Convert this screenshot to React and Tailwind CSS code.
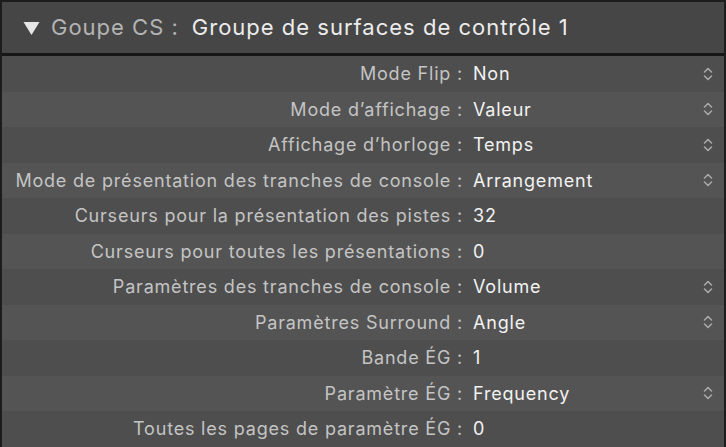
import React from "react";

const rows = [
  { label: "Mode Flip", value: "Non", pop: true },
  { label: "Mode d’affichage", value: "Valeur", pop: true },
  { label: "Affichage d’horloge", value: "Temps", pop: true },
  { label: "Mode de présentation des tranches de console", value: "Arrangement", pop: true },
  { label: "Curseurs pour la présentation des pistes", value: "32", pop: false },
  { label: "Curseurs pour toutes les présentations", value: "0", pop: false },
  { label: "Paramètres des tranches de console", value: "Volume", pop: true },
  { label: "Paramètres Surround", value: "Angle", pop: true },
  { label: "Bande ÉG", value: "1", pop: false },
  { label: "Paramètre ÉG", value: "Frequency", pop: true },
  { label: "Toutes les pages de paramètre ÉG", value: "0", pop: false },
];

function Chevrons() {
  return (
    <svg width="12" height="16" viewBox="0 0 12 16" fill="none" stroke="#a8a8a8" strokeWidth="1.6" strokeLinecap="round" strokeLinejoin="round">
      <path d="M2.5 6 L6 2.5 L9.5 6" />
      <path d="M2.5 10 L6 13.5 L9.5 10" />
    </svg>
  );
}

export default function App() {
  return (
    <div
      className="w-[726px] h-[447px] bg-[#1c1c1c] pl-[2px] pr-[2px] pt-[2px] overflow-hidden flex flex-col"
      style={{ fontFamily: "Inter, 'Liberation Sans', sans-serif" }}
    >
      <div className="h-[51px] bg-[#464646] flex items-center pl-[21px] text-[22px] tracking-[1px] shrink-0">
        <svg width="17" height="14" viewBox="0 0 17 14" className="mr-[11px]">
          <path d="M0.5 1 L16.5 1 L8.5 14 Z" fill="#e6e6e6" />
        </svg>
        <span className="text-[#b4b4b4]">Goupe CS :</span>
        <span className="text-[#ececec] ml-[13px]">Groupe de surfaces de contrôle 1</span>
      </div>
      <div className="h-[3px] bg-[#161616] shrink-0" />
      <div className="flex flex-col">
        {rows.map((r, i) => (
          <div
            key={i}
            className={`h-[35.5px] flex items-center text-[18px] tracking-[0.8px] ${i % 2 === 0 ? "bg-[#4e4e4e]" : "bg-[#545454]"}`}
          >
            <div className="w-[461px] text-right text-[#c4c4c4] whitespace-nowrap">{r.label} :</div>
            <div className="ml-[10px] flex-1 text-[#f2f2f2]">{r.value}</div>
            <div className="w-[22px] flex justify-start">{r.pop ? <Chevrons /> : null}</div>
          </div>
        ))}
      </div>
      <div className="h-[1px] bg-[#b0b0b0]" />
    </div>
  );
}
